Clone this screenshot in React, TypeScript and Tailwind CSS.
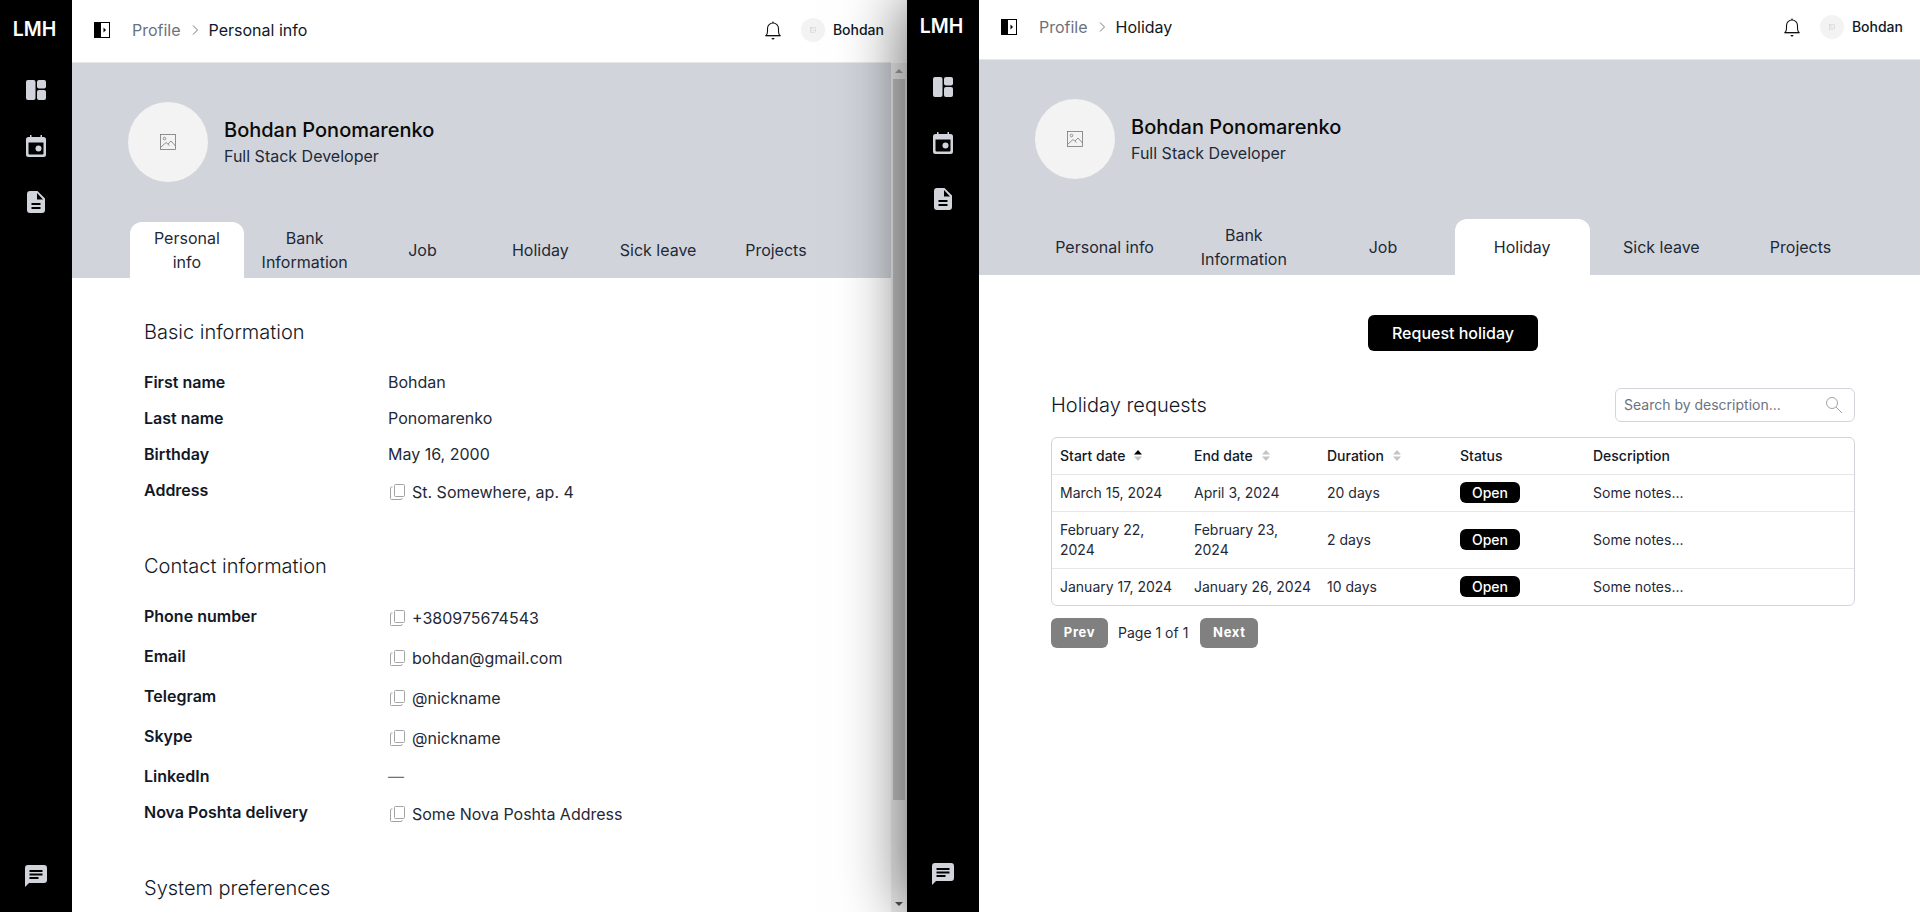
import React from "react";

const GRAY = "#d1d5db";

const Dashboard = () => (
  <svg width="20" height="20" viewBox="0 0 20 20" fill={GRAY}>
    <rect x="0" y="0" width="9.500" height="20" rx="2" />
    <rect x="11" y="0" width="9" height="8.500" rx="2" />
    <rect x="11" y="10" width="9" height="10" rx="2" />
  </svg>
);

const Calendar = () => (
  <svg width="20" height="22" viewBox="0 0 20 22" fill={GRAY}>
    <path
      fillRule="evenodd"
      d="M4 0h1.500v2h9V0H16v2h1.500A2.500 2.500 0 0 1 20 4.500v15a2.500 2.500 0 0 1-2.500 2.500h-15A2.500 2.500 0 0 1 0 19.500v-15A2.500 2.500 0 0 1 2.500 2H4V0ZM2.500 7.500v11a1 1 0 0 0 1 1h13a1 1 0 0 0 1-1v-11h-15Z"
    />
    <circle cx="12.500" cy="13.500" r="3" />
  </svg>
);

const Doc = () => (
  <svg width="18" height="22" viewBox="0 0 18 22" fill={GRAY}>
    <path
      fillRule="evenodd"
      d="M3 0h7.500L18 7.500V19a3 3 0 0 1-3 3H3a3 3 0 0 1-3-3V3a3 3 0 0 1 3-3Zm7 2v6.500h6L10 2ZM4.500 12v2h9v-2h-9Zm0 4v2h9v-2h-9Z"
    />
  </svg>
);

const Chat = () => (
  <svg width="22" height="22" viewBox="0 0 22 22" fill={GRAY}>
    <path
      fillRule="evenodd"
      d="M3 0h16a3 3 0 0 1 3 3v12a3 3 0 0 1-3 3H4l-4 4V3a3 3 0 0 1 3-3Zm1.500 5v2h13V5h-13Zm0 3.500v2h13v-2h-13Zm0 3.500v2h9v-2h-9Z"
    />
  </svg>
);

const Toggle = () => (
  <svg width="16" height="16" viewBox="0 0 16 16">
    <rect x="0.500" y="0.500" width="15" height="15" fill="#fff" stroke="#000" />
    <rect x="0" y="0" width="7" height="16" fill="#000" />
    <path d="M9.500 5.500 12 8l-2.500 2.500Z" fill="#000" />
  </svg>
);

const Bell = () => (
  <svg width="16" height="19" viewBox="0 0 16 19" fill="none" stroke="#111" strokeWidth="1.100">
    <path d="M1 14.500c1-1 1.500-2 1.500-4V7.500a5.500 5.500 0 0 1 11 0v3c0 2 .5 3 1.500 4Z" strokeLinejoin="round" />
    <path d="M.5 14.800h15" />
    <circle cx="8" cy="1.200" r=".8" fill="#111" stroke="none" />
    <path d="M6.500 17h3a1.500 1.500 0 0 1-3 0Z" fill="#111" stroke="none" />
  </svg>
);

const ImageIcon = ({ size, color }: { size: number; color: string }) => (
  <svg width={size} height={size} viewBox="0 0 16 16" fill="none" stroke={color} strokeWidth="0.800">
    <rect x="0.500" y="0.500" width="15" height="15" />
    <circle cx="4.500" cy="4.500" r="1.300" />
    <path d="M.5 13.500 6 8.500l3.500 3M8 10l3-3 4.500 5" />
  </svg>
);

const Copy = () => (
  <svg width="15" height="16" viewBox="0 0 15 16" fill="none" stroke="#a3a3a3" strokeWidth="1" className="shrink-0">
    <rect x="4.500" y="0.500" width="10" height="12" rx="1" />
    <path d="M2.500 3H1.500a1 1 0 0 0-1 1v10.500a1 1 0 0 0 1 1H11a1 1 0 0 0 1-1v-.5" />
  </svg>
);

const Sort = ({ up }: { up?: boolean }) => (
  <svg width="8" height="11" viewBox="0 0 8 11">
    <path d="M4 0 8 4.500H0Z" fill={up ? "#000" : "#c4c4c4"} />
    <path d="M4 11 0 6.500h8Z" fill="#c4c4c4" />
  </svg>
);

const tabs = ["Personal info", "Bank Information", "Job", "Holiday", "Sick leave", "Projects"];

interface PanelProps {
  crumb: string;
  active: string;
  tabWidth: string;
  headerCls: string;
  logoCls: string;
  navCls: string;
  chatCls: string;
  children: React.ReactNode;
}

const Panel = ({ crumb, active, tabWidth, headerCls, logoCls, navCls, chatCls, children }: PanelProps) => (
  <div className="flex h-full min-w-0 flex-1">
    <aside className="flex h-full w-[72px] shrink-0 flex-col items-center bg-black">
      <div className={`flex ${logoCls} w-full items-center justify-center pr-[3px] text-[19.500px] font-semibold text-white`}>LMH</div>
      <div className={`flex flex-col items-center ${navCls}`}>
        <Dashboard />
        <div className="mt-[35px]">
          <Calendar />
        </div>
        <div className="mt-[34px]">
          <Doc />
        </div>
      </div>
      <div className={`mt-auto ${chatCls}`}>
        <Chat />
      </div>
    </aside>
    <div className="flex min-w-0 flex-1 flex-col">
      <header className={`flex ${headerCls} shrink-0 items-center border-b border-[#e5e7eb] bg-white pl-[22px]`}>
        <Toggle />
        <span className="ml-[22px] text-base text-[#6b7280]">Profile</span>
        <span className="ml-[10px] mr-[9px]">
          <svg width="9" height="12" viewBox="0 0 9 12" fill="none" stroke="#777" strokeWidth="1">
            <path d="m2 1.500 4.500 4.500L2 10.500" />
          </svg>
        </span>
        <span className="text-base text-[#111827]">{crumb}</span>
        <div className="ml-auto flex items-center">
          <Bell />
          <div className="ml-[20px] flex h-6 w-6 items-center justify-center rounded-full bg-[#f3f3f3]">
            <ImageIcon size={6} color="#bbb" />
          </div>
          <span className="ml-[8px] text-sm font-medium text-[#111827]">Bohdan</span>
        </div>
      </header>
      <div className="flex min-h-0 flex-1">
        <div className="min-w-0 flex-1 overflow-hidden">
          <div className="h-[215px] bg-[#d1d5db]">
            <div className="flex items-center gap-4 pl-[56px] pt-[39px]">
              <div className="flex h-20 w-20 items-center justify-center rounded-full bg-[#f3f3f3]">
                <ImageIcon size={16} color="#777" />
              </div>
              <div className="pt-[1px]">
                <div className="text-xl font-medium leading-7 text-[#0a0a0a]">Bohdan Ponomarenko</div>
                <div className="text-base leading-[25px] text-[#1f2937]">Full Stack Developer</div>
              </div>
            </div>
            <div className="mt-[40px] flex gap-1 pl-[58px]">
              {tabs.map((t) => (
                <div
                  key={t}
                  className={`flex h-14 ${tabWidth} items-center justify-center rounded-t-xl px-4 text-center text-base leading-6 text-[#1f2937] ${
                    t === active ? "bg-white" : ""
                  }`}
                >
                  {t}
                </div>
              ))}
            </div>
          </div>
          {children}
        </div>
      </div>
    </div>
  </div>
);

interface InfoRow {
  label: string;
  value: string;
  copy?: boolean;
  cls: string;
}

const Row = ({ label, value, copy, cls }: InfoRow) => (
  <div className={`flex items-start ${cls}`}>
    <div className="w-[244px] shrink-0 text-base font-semibold leading-6 text-[#111827]">{label}</div>
    {copy ? (
      <div className="mt-[2px] flex items-center gap-[7px] pl-[2px] text-base leading-6 text-[#1f2937]">
        <Copy />
        {value}
      </div>
    ) : (
      <div className={`text-base leading-6 ${value === "—" ? "text-[#6b7280]" : "text-[#1f2937]"}`}>{value}</div>
    )}
  </div>
);

const PersonalInfo = () => (
  <div className="pl-[72px] pt-[40px]">
    <h2 className="text-xl font-light leading-7 text-[#111827]">Basic information</h2>
    <div className="mt-[24px]">
      <Row label="First name" value="Bohdan" cls="h-9" />
      <Row label="Last name" value="Ponomarenko" cls="h-9" />
      <Row label="Birthday" value="May 16, 2000" cls="h-9" />
      <Row label="Address" value="St. Somewhere, ap. 4" copy cls="h-9" />
    </div>
    <h2 className="mt-[38px] text-xl font-light leading-7 text-[#111827]">Contact information</h2>
    <div className="mt-[24px]">
      <Row label="Phone number" value="+380975674543" copy cls="h-10" />
      <Row label="Email" value="bohdan@gmail.com" copy cls="h-10" />
      <Row label="Telegram" value="@nickname" copy cls="h-10" />
      <Row label="Skype" value="@nickname" copy cls="h-10" />
      <Row label="LinkedIn" value="—" cls="h-9" />
      <Row label="Nova Poshta delivery" value="Some Nova Poshta Address" copy cls="h-9" />
    </div>
    <h2 className="mt-[38px] text-xl font-light leading-7 text-[#111827]">System preferences</h2>
  </div>
);

const requests = [
  { start: "March 15, 2024", end: "April 3, 2024", duration: "20 days" },
  { start: "February 22, 2024", end: "February 23, 2024", duration: "2 days" },
  { start: "January 17, 2024", end: "January 26, 2024", duration: "10 days" },
];

const Holiday = () => (
  <div className="pl-[72px] pr-[65px] pt-[40px]">
    <div className="flex justify-center">
      <button className="h-9 w-[170px] rounded-md bg-black text-base font-medium text-white">Request holiday</button>
    </div>
    <div className="mt-[37px] flex items-center justify-between">
      <h2 className="text-xl font-light leading-7 text-[#111827]">Holiday requests</h2>
      <div className="flex h-[34px] w-[240px] items-center justify-between rounded-md border border-[#d1d5db] pb-[1px] pl-2 pr-[11px]">
        <span className="text-[14px] text-[#6b7280]">Search by description...</span>
        <svg width="18" height="18" viewBox="0 0 18 18" fill="none" stroke="#a3a3a3" strokeWidth="1">
          <circle cx="7" cy="7" r="5.500" />
          <path d="m11 11 6 6" />
        </svg>
      </div>
    </div>
    <div className="mt-[15px] overflow-hidden rounded-md border border-[#d1d5db]">
      <table className="w-full table-fixed text-left text-[14px] leading-5 text-[#1f2937]">
        <thead>
          <tr className="h-[36px] border-b border-[#e5e7eb] text-[#111827]">
            <th className="w-[134px] pl-2 font-medium">
              <span className="flex items-center gap-[9px]">Start date <Sort up /></span>
            </th>
            <th className="w-[133px] pl-2 font-medium">
              <span className="flex items-center gap-[9px]">End date <Sort /></span>
            </th>
            <th className="w-[133px] pl-2 font-medium">
              <span className="flex items-center gap-[9px]">Duration <Sort /></span>
            </th>
            <th className="w-[133px] pl-2 font-medium">Status</th>
            <th className="pl-2 font-medium">Description</th>
          </tr>
        </thead>
        <tbody>
          {requests.map((r, i) => (
            <tr key={r.start} className={i < 2 ? "border-b border-[#e5e7eb]" : ""}>
              <td className="py-2 pl-2 pr-2">{r.start}</td>
              <td className="py-2 pl-2 pr-2">{r.end}</td>
              <td className="py-2 pl-2">{r.duration}</td>
              <td className="pl-2">
                <span className="flex h-[21px] w-[60px] items-center justify-center rounded-md bg-black text-[14px] font-medium text-white">
                  Open
                </span>
              </td>
              <td className="py-2 pl-2">Some notes...</td>
            </tr>
          ))}
        </tbody>
      </table>
    </div>
    <div className="mt-[12px] flex items-center text-[14px] text-[#1f2937]">
      <button className="h-[30px] w-[57px] rounded-md bg-[#808080] text-[13px] font-bold tracking-[0.05em] text-white">Prev</button>
      <span className="ml-[10px] mr-[12px]">Page 1 of 1</span>
      <button className="h-[30px] w-[58px] rounded-md bg-[#808080] text-[13px] font-bold tracking-[0.05em] text-white">Next</button>
    </div>
  </div>
);

const Scrollbar = () => (
  <div className="flex h-full w-[16px] shrink-0 flex-col bg-[#f1f1f1]">
    <div className="flex h-[16px] items-center justify-center">
      <div className="h-0 w-0 border-x-4 border-b-4 border-x-transparent border-b-[#a3a3a3]" />
    </div>
    <div className="mx-[2px] h-[721px] bg-[#c8c8c8]" />
    <div className="mt-auto flex h-[16px] items-center justify-center">
      <div className="h-0 w-0 border-x-4 border-t-4 border-x-transparent border-t-[#505050]" />
    </div>
  </div>
);

export default function App() {
  return (
    <div className="flex h-[912px] w-[1920px] overflow-hidden bg-white font-['Inter',sans-serif]">
      <div className="relative h-full w-[907px] shrink-0">
        <div className="flex h-full">
          <Panel
            crumb="Personal info"
            active="Personal info"
            tabWidth="w-[113.800px]"
            headerCls="h-[63px] pb-[2px] pr-[7px]"
            logoCls="h-[60px]"
            navCls="pt-[20px]"
            chatCls="pb-[25px]"
          >
            <PersonalInfo />
          </Panel>
          <div className="flex h-full flex-col">
            <div className="h-[63px] bg-white" />
            <div className="min-h-0 flex-1">
              <Scrollbar />
            </div>
          </div>
        </div>
      </div>
      <div className="relative z-10 h-full w-[1013px] shrink-0 shadow-[-2px_0_60px_rgba(0,0,0,0.6)]">
        <Panel
          crumb="Holiday"
          active="Holiday"
          tabWidth="w-[135.200px]"
          headerCls="h-[60px] pb-[5px] pr-[17px]"
          logoCls="h-[54px]"
          navCls="pt-[23px]"
          chatCls="pb-[27px]"
        >
          <Holiday />
        </Panel>
      </div>
    </div>
  );
}
